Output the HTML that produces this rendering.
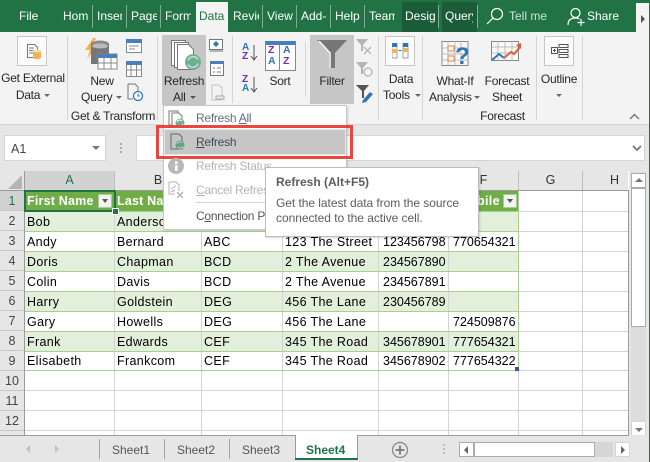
<!DOCTYPE html>
<html><head><meta charset="utf-8">
<style>
html,body{margin:0;padding:0;width:650px;height:462px;overflow:hidden;background:#e6e6e6}
body{position:relative;font-family:"Liberation Sans",sans-serif;font-size:12px;color:#262626}
.a{position:absolute}
.t{position:absolute;white-space:nowrap;line-height:16px;letter-spacing:-.25px}
.c{text-align:center}
.tab{position:absolute;top:7px;color:#fff;font-size:12px;line-height:19px;white-space:nowrap;overflow:hidden}
.sep{position:absolute;top:5px;width:1px;height:23px;background:#7fae95}
.rs{position:absolute;top:36px;width:1px;height:84px;background:#d4d4d4}
.cell{position:absolute;white-space:nowrap;font-size:12.5px;line-height:20px;color:#000;overflow:hidden;letter-spacing:.35px}
.n{letter-spacing:0}
.rh{position:absolute;left:0;width:24px;height:19px;background:#e6e6e6;text-align:center;line-height:21px;font-size:12.5px;color:#444;border-bottom:1px solid #c6c6c6}
.ch{position:absolute;top:171px;height:19px;background:#e6e6e6;text-align:center;line-height:19px;font-size:12.5px;color:#333;border-right:1px solid #bdbdbd}
.h{position:absolute;left:25px;width:603px;height:1px;background:#d4d4d4}
.v{position:absolute;top:191px;width:1px;height:244px;background:#d4d4d4}
.b{position:absolute;left:25px;width:493px;height:19px;background:#e2efda}
.g{position:absolute;left:25px;width:493px;height:1px;background:#a9d08e}
.m{position:absolute;left:196px;font-size:12px;line-height:16px;white-space:nowrap;letter-spacing:-.25px}
.st{position:absolute;top:442px;font-size:12px;color:#555;line-height:16px}
.dv{position:absolute;top:439px;width:1px;height:20px;background:#a6a6a6}
u{text-decoration:underline}
</style></head><body>

<!-- title / tabs bar -->
<div class="a" style="left:0;top:0;width:650px;height:32px;background:#217346"></div>
<div class="a" style="left:196px;top:2px;width:32px;height:30px;background:#f3f3f3"></div>
<div class="a" style="left:402px;top:2px;width:36px;height:30px;background:#1a5c38"></div>
<div class="a" style="left:442px;top:2px;width:35px;height:30px;background:#1a5c38"></div>
<div class="tab" style="left:19px;width:30px">File</div>
<div class="tab" style="left:63px;width:26px">Home</div>
<div class="tab" style="left:97px;width:25px">Insert</div>
<div class="tab" style="left:131px;width:26px">Page</div>
<div class="tab" style="left:165px;width:26px">Form</div>
<div class="tab" style="left:199px;width:28px;color:#217346">Data</div>
<div class="tab" style="left:233px;width:26px">Review</div>
<div class="tab" style="left:267px;width:26px">View</div>
<div class="tab" style="left:301px;width:28px">Add-</div>
<div class="tab" style="left:335px;width:26px">Help</div>
<div class="tab" style="left:369px;width:26px">Team</div>
<div class="tab" style="left:405px;width:30px">Design</div>
<div class="tab" style="left:445px;width:28px">Query</div>
<div class="sep" style="left:92px"></div><div class="sep" style="left:126px"></div><div class="sep" style="left:160px"></div><div class="sep" style="left:262px"></div><div class="sep" style="left:296px"></div><div class="sep" style="left:330px"></div><div class="sep" style="left:364px"></div><div class="sep" style="left:438px"></div><div class="sep" style="left:477px"></div>
<svg class="a" style="left:485px;top:6px" width="20" height="20" viewBox="0 0 20 20" fill="none" stroke="#fff" stroke-width="1.2"><circle cx="12" cy="8" r="5.5"/><path d="M8 12L2 18"/></svg>
<div class="tab" style="left:509px;color:#cfe3d8">Tell me</div>
<svg class="a" style="left:567px;top:7px" width="20" height="20" viewBox="0 0 20 20" fill="none" stroke="#fff" stroke-width="1.2"><circle cx="8.5" cy="6" r="4.5"/><path d="M1 18c0-5 3-7 7.500-7 2 0 3 .5 4 1"/><path d="M14 12v7M10.500 15.500h7"/></svg>
<div class="tab" style="left:587px">Share</div>
<div class="a" style="left:636px;top:3px;width:13px;height:29px;background:#f3f3f3"></div>
<div class="a" style="left:641px;top:15px;border-left:4px solid #555;border-top:4px solid transparent;border-bottom:4px solid transparent"></div>

<!-- ribbon -->
<div class="a" style="left:0;top:32px;width:650px;height:92px;background:#f3f3f3;border-bottom:1px solid #d4d4d4"></div>
<div class="rs" style="left:67px"></div><div class="rs" style="left:157px"></div><div class="rs" style="left:378px"></div><div class="rs" style="left:422px"></div><div class="rs" style="left:536px"></div><div class="rs" style="left:582px"></div>
<div class="a" style="left:232px;top:36px;width:1px;height:67px;background:#d4d4d4"></div>
<div class="a" style="left:305px;top:42px;width:1px;height:55px;background:#d4d4d4"></div>

<!-- highlighted buttons -->
<div class="a" style="left:162px;top:35px;width:44px;height:70px;background:#c6c6c6"></div>
<div class="a" style="left:310px;top:35px;width:44px;height:69px;background:#c6c6c6"></div>

<!-- Get External -->
<div class="a" style="left:17px;top:36px;width:30px;height:30px;background:#fafafa;border:1px solid #c6c6c6;box-sizing:border-box"></div>
<svg class="a" style="left:24px;top:42px" width="20" height="20" viewBox="0 0 20 20"><path d="M3.500 2.500h7l3 3v6h-4v4h-6z" fill="#fff" stroke="#777"/><path d="M5 6h5M5 8.500h4M5 11h4" stroke="#777"/><rect x="9" y="8" width="8" height="9" rx="2" fill="#eeb45c"/><ellipse cx="13" cy="9" rx="4" ry="1.500" fill="#f7dca8"/></svg>
<div class="t c" style="left:0;top:70px;width:66px">Get External</div>
<div class="t c" style="left:0;top:87px;width:56px">Data</div>
<div class="a" style="left:44px;top:94px;border-top:3px solid #666;border-left:3px solid transparent;border-right:3px solid transparent"></div>

<!-- New Query -->
<svg class="a" style="left:83px;top:37px" width="36" height="36" viewBox="0 0 36 36"><path d="M10 1L2 13h5l-3 9 10-13H9l4-8z" fill="#eeb45c"/><ellipse cx="17" cy="7" rx="9" ry="3.500" fill="#8a8a8a"/><path d="M8 7v20h18V7z" fill="#777"/><ellipse cx="17" cy="9" rx="8" ry="2.500" fill="#bbb"/><rect x="15" y="17" width="19" height="15" fill="#fff" stroke="#888"/><rect x="15" y="17" width="19" height="4" fill="#4a7eb8"/><path d="M21 21v11M28 21v11M15 26h19" stroke="#888"/></svg>
<div class="t c" style="left:84px;top:73px;width:36px">New</div>
<div class="t" style="left:81px;top:89px">Query</div>
<div class="a" style="left:116px;top:96px;border-top:3px solid #666;border-left:3px solid transparent;border-right:3px solid transparent"></div>
<svg class="a" style="left:126px;top:38px" width="18" height="70" viewBox="0 0 18 70"><rect x=".5" y="1.500" width="15" height="13" fill="#fff" stroke="#888"/><rect x="0" y="1" width="16" height="4" fill="#4a7eb8"/><path d="M3 8h10M3 11h6" stroke="#888"/><rect x=".5" y="23.500" width="15" height="15" fill="#fff" stroke="#888"/><rect x="0" y="23" width="16" height="4" fill="#4a7eb8"/><path d="M5 27v11M10.500 27v11M1 32h14" stroke="#888"/><path d="M2 46h7l3 3v6" fill="none" stroke="#777"/><path d="M2 46v15h5" fill="none" stroke="#777"/><circle cx="12" cy="58" r="4.500" fill="#fff" stroke="#2e75b6" stroke-width="1.300"/><path d="M12 55.500V58h2" fill="none" stroke="#2e75b6"/></svg>
<div class="t c" style="left:70px;top:108px;width:86px">Get &amp; Transform</div>

<!-- Refresh All -->
<svg class="a" style="left:170px;top:39px" width="34" height="34" viewBox="0 0 34 34"><path d="M1.500 1.500h14v25h-14z" fill="#fff" stroke="#777"/><path d="M4.500 3.500h14v25h-14z" fill="#fff" stroke="#777"/><path d="M7.500 5.500h11l5 5v20h-16z" fill="#fff" stroke="#777"/><circle cx="23" cy="23" r="8" fill="#6db08e"/><path d="M18 21.500a5.500 5.500 0 0 1 10-1M28 24.500a5.500 5.500 0 0 1-10 1" stroke="#c6dccf" stroke-width="1.600" fill="none"/></svg>
<div class="t c" style="left:162px;top:73px;width:44px">Refresh</div>
<div class="t" style="left:173px;top:89px">All</div>
<div class="a" style="left:190px;top:96px;border-top:3px solid #555;border-left:3px solid transparent;border-right:3px solid transparent"></div>
<svg class="a" style="left:208px;top:38px" width="18" height="66" viewBox="0 0 18 66"><rect x="1.500" y="1.500" width="13" height="10" fill="#fff" stroke="#777"/><path d="M8 3l3 3-3 3-3-3z" fill="#2e75b6"/><path d="M2 13h13" stroke="#777"/><rect x="2.500" y="23.500" width="13" height="14" fill="#fff" stroke="#777"/><rect x="2" y="23" width="14" height="3" fill="#4a7eb8"/><path d="M5 30h2M9 30h4M5 34h2M9 34h4" stroke="#777"/><path d="M4 47h7l3 3v12H4z" fill="none" stroke="#c0c0c0"/><path d="M8 58h8v3H8z" fill="#eee" stroke="#aaa"/></svg>

<!-- Sort -->
<div class="t" style="left:242px;top:43px;font-size:10px;line-height:9px;color:#2e75b6;font-weight:bold;letter-spacing:0">A<br><span style="color:#7030a0">Z</span></div>
<svg class="a" style="left:250px;top:44px" width="8" height="18" viewBox="0 0 8 18" fill="none" stroke="#555"><path d="M4 1v15M1 12l3 4 3-4"/></svg>
<div class="t" style="left:242px;top:75px;font-size:10px;line-height:9px;color:#7030a0;font-weight:bold;letter-spacing:0">Z<br><span style="color:#2e75b6">A</span></div>
<svg class="a" style="left:250px;top:76px" width="8" height="18" viewBox="0 0 8 18" fill="none" stroke="#555"><path d="M4 1v15M1 12l3 4 3-4"/></svg>
<div class="a" style="left:265px;top:41px;width:29px;height:25px;background:#fff;border:1px solid #888;border-top:4px solid #4a7eb8;box-sizing:content-box"></div>
<div class="a" style="left:279px;top:45px;width:1px;height:25px;background:#888"></div>
<div class="t" style="left:268px;top:45px;font-size:10.500px;line-height:11px;color:#7030a0;font-weight:bold;letter-spacing:0">Z<br><span style="color:#2e75b6">A</span></div>
<div class="t" style="left:283px;top:45px;font-size:10.500px;line-height:11px;color:#2e75b6;font-weight:bold;letter-spacing:0">A<br><span style="color:#7030a0">Z</span></div>
<div class="t c" style="left:262px;top:73px;width:36px">Sort</div>

<!-- Filter -->
<svg class="a" style="left:316px;top:38px" width="32" height="32" viewBox="0 0 32 32"><path d="M1 2h30L19 15v15h-6V15z" fill="#777"/><path d="M3 3l11 12v15M14 15" fill="none" stroke="#fff" stroke-width="1.500"/></svg>
<div class="t c" style="left:310px;top:73px;width:44px">Filter</div>
<svg class="a" style="left:355px;top:38px" width="20" height="66" viewBox="0 0 20 66"><path d="M1 1h12L8 7v6H6V7z" fill="#b5b5b5"/><path d="M9 9l7 7M16 9l-7 7" stroke="#b5b5b5" stroke-width="1.300"/><path d="M1 24h12L8 30v6H6v-6z" fill="#b5b5b5"/><circle cx="13" cy="34" r="4" fill="none" stroke="#b5b5b5" stroke-width="1.300"/><path d="M1 47h13L9 53v7H7v-7z" fill="#555"/><path d="M8 62l7-8 3 2-7 8-4 1z" fill="#2e75b6"/></svg>

<!-- Data tools -->
<div class="a" style="left:385px;top:36px;width:30px;height:30px;background:#fafafa;border:1px solid #c6c6c6;box-sizing:border-box"></div>
<svg class="a" style="left:392px;top:43px" width="18" height="16" viewBox="0 0 18 16"><rect x="0" y="0" width="5" height="15" fill="#fff" stroke="#666" stroke-width=".6"/><rect x="0" y="0" width="5" height="4" fill="#2e75b6"/><rect x="0" y="6" width="5" height="4" fill="#eeb45c"/><rect x="11" y="0" width="5" height="15" fill="#fff" stroke="#666" stroke-width=".6"/><rect x="11" y="0" width="5" height="4" fill="#2e75b6"/><rect x="11" y="5" width="5" height="4" fill="#eeb45c"/><path d="M6.500 7.500h3" stroke="#2e75b6"/></svg>
<div class="t c" style="left:380px;top:71px;width:42px">Data</div>
<div class="t" style="left:383px;top:87px">Tools</div>
<div class="a" style="left:415px;top:94px;border-top:3px solid #666;border-left:3px solid transparent;border-right:3px solid transparent"></div>

<!-- What-If -->
<svg class="a" style="left:441px;top:40px" width="36" height="34" viewBox="0 0 36 34"><rect x="1" y="1.500" width="26" height="24" fill="#f8f8f8" stroke="#888"/><path d="M1 8h26M1 14h26M1 20h26M7 1v25M14 1v25M20 1v25" stroke="#aaa" stroke-width=".7"/><rect x="7" y="6" width="6" height="5" fill="#fff" stroke="#ed7d31"/><rect x="7" y="16" width="6" height="5" fill="#fff" stroke="#ed7d31"/></svg>
<div class="t" style="left:455px;top:43px;font-size:24px;line-height:28px;font-weight:bold;color:#2e75b6;letter-spacing:0">?</div>
<div class="t c" style="left:426px;top:73px;width:58px">What-If</div>
<div class="t" style="left:429px;top:89px">Analysis</div>
<div class="a" style="left:474px;top:96px;border-top:3px solid #666;border-left:3px solid transparent;border-right:3px solid transparent"></div>

<!-- Forecast -->
<svg class="a" style="left:491px;top:40px" width="34" height="28" viewBox="0 0 34 28"><rect x=".5" y="1.500" width="27" height="19" fill="#f8f8f8" stroke="#888"/><path d="M1 7h27M1 13h27M7 1v20M14 1v20M21 1v20" stroke="#aaa" stroke-width=".7"/><path d="M1 20l7-6 5 4" fill="none" stroke="#2e75b6" stroke-width="2"/><path d="M13 18l7-6 3 2 6-7" fill="none" stroke="#d9603b" stroke-width="2"/><path d="M25 5l5-2v6z" fill="#d9603b"/></svg>
<div class="t c" style="left:479px;top:73px;width:56px">Forecast</div>
<div class="t c" style="left:479px;top:89px;width:56px">Sheet</div>
<div class="t c" style="left:423px;top:108px;width:159px">Forecast</div>

<!-- Outline -->
<div class="a" style="left:544px;top:36px;width:30px;height:30px;background:#fafafa;border:1px solid #c6c6c6;box-sizing:border-box"></div>
<svg class="a" style="left:551px;top:44px" width="18" height="15" viewBox="0 0 18 15" fill="none" stroke="#555"><rect x=".5" y="3.500" width="6" height="6"/><path d="M2 6.500h3M3.500 5v3M8 .5h9v3H8zM8 5.500h9v3H8zM8 10.500h9v3H8z"/></svg>
<div class="t c" style="left:537px;top:71px;width:44px">Outline</div>
<div class="a" style="left:556px;top:94px;border-top:3px solid #666;border-left:3px solid transparent;border-right:3px solid transparent"></div>
<svg class="a" style="left:629px;top:113px" width="11" height="7" viewBox="0 0 11 7" fill="none" stroke="#777" stroke-width="1.500"><path d="M1 6l4.500-4.500L10 6"/></svg>

<!-- formula bar -->
<div class="a" style="left:4px;top:135px;width:102px;height:26px;background:#fff;border:1px solid #d4d4d4;box-sizing:border-box"></div>
<div class="t" style="left:11px;top:141px;font-size:12.500px;color:#444;letter-spacing:0">A1</div>
<div class="a" style="left:92px;top:146px;border-top:4px solid #777;border-left:4px solid transparent;border-right:4px solid transparent"></div>
<div class="a" style="left:120px;top:143px;width:2px;height:2px;background:#aaa;box-shadow:0 4px #aaa,0 8px #aaa"></div>
<div class="a" style="left:136px;top:135px;width:509px;height:26px;background:#fff;border:1px solid #d4d4d4;box-sizing:border-box"></div>
<svg class="a" style="left:632px;top:145px" width="10" height="7" viewBox="0 0 10 7" fill="none" stroke="#777" stroke-width="1.800"><path d="M1 1l4 4 4-4"/></svg>

<!-- grid -->
<div class="a" style="left:0;top:171px;width:629px;height:264px;background:#fff"></div>
<div class="b" style="top:212px"></div><div class="b" style="top:252px"></div><div class="b" style="top:292px"></div><div class="b" style="top:332px"></div>
<div class="h" style="top:211px"></div><div class="h" style="top:231px"></div><div class="h" style="top:251px"></div><div class="h" style="top:271px"></div><div class="h" style="top:291px"></div><div class="h" style="top:311px"></div><div class="h" style="top:331px"></div><div class="h" style="top:351px"></div><div class="h" style="top:370px"></div><div class="h" style="top:390px"></div><div class="h" style="top:410px"></div><div class="h" style="top:430px"></div>
<div class="v" style="left:114px"></div><div class="v" style="left:201px"></div><div class="v" style="left:282px"></div><div class="v" style="left:378px"></div><div class="v" style="left:448px"></div><div class="v" style="left:518px"></div><div class="v" style="left:582px"></div>
<div class="g" style="top:231px"></div><div class="g" style="top:251px"></div><div class="g" style="top:271px"></div><div class="g" style="top:291px"></div><div class="g" style="top:311px"></div><div class="g" style="top:331px"></div><div class="g" style="top:351px"></div><div class="g" style="top:370px"></div><div class="g" style="top:211px"></div>
<div class="a" style="left:518px;top:191px;width:1px;height:180px;background:#a9d08e"></div>
<div class="a" style="left:25px;top:191px;width:493px;height:20px;background:#70ad47"></div>

<!-- headers -->
<div class="a" style="left:0;top:171px;width:24px;height:19px;background:#e6e6e6"></div>
<svg class="a" style="left:7px;top:175px" width="15" height="14"><path d="M15 0v14H1z" fill="#b4b4b4"/></svg>
<div class="ch" style="left:25px;width:89px;background:#d2d2d2;color:#217346">A</div>
<div class="ch" style="left:115px;width:86px">B</div>
<div class="ch" style="left:202px;width:80px">C</div>
<div class="ch" style="left:283px;width:95px">D</div>
<div class="ch" style="left:379px;width:69px">E</div>
<div class="ch" style="left:449px;width:69px">F</div>
<div class="ch" style="left:519px;width:63px">G</div>
<div class="ch" style="left:583px;width:45px;border-right:0;text-indent:18px">H</div>
<div class="a" style="left:24px;top:171px;width:1px;height:264px;background:#9b9b9b"></div>
<div class="a" style="left:0;top:190px;width:629px;height:1px;background:#9b9b9b"></div>
<div class="a" style="left:628px;top:190px;width:1px;height:245px;background:#9b9b9b"></div>
<div class="rh" style="top:191px;background:#d2d2d2;color:#217346">1</div>
<div class="rh" style="top:211px">2</div><div class="rh" style="top:231px">3</div><div class="rh" style="top:251px">4</div><div class="rh" style="top:271px">5</div><div class="rh" style="top:291px">6</div><div class="rh" style="top:311px">7</div><div class="rh" style="top:331px">8</div><div class="rh" style="top:351px">9</div><div class="rh" style="top:371px">10</div><div class="rh" style="top:391px">11</div><div class="rh" style="top:411px">12</div><div class="rh" style="top:431px;height:4px;line-height:4px;border:0"></div>

<!-- cells -->
<div class="cell" style="left:27px;top:191px;width:70px;color:#fff;font-weight:bold;letter-spacing:.2px">First Name</div>
<div class="cell" style="left:117px;top:191px;width:60px;color:#fff;font-weight:bold;letter-spacing:.2px">Last Name</div>
<div class="cell" style="left:477px;top:191px;width:24px;color:#fff;font-weight:bold">bile</div>
<div class="a" style="left:98px;top:194px;width:14px;height:14px;background:#f2f2f2;border:1px solid #a9c998;box-sizing:border-box"></div>
<div class="a" style="left:102px;top:199px;border-top:4px solid #555;border-left:3.500px solid transparent;border-right:3.500px solid transparent"></div>
<div class="a" style="left:503px;top:194px;width:14px;height:14px;background:#f2f2f2;border:1px solid #a9c998;box-sizing:border-box"></div>
<div class="a" style="left:507px;top:199px;border-top:4px solid #555;border-left:3.500px solid transparent;border-right:3.500px solid transparent"></div>

<div class="cell" style="left:27px;top:212px">Bob</div><div class="cell" style="left:117px;top:212px">Anderson</div>
<div class="cell" style="left:27px;top:232px">Andy</div><div class="cell" style="left:117px;top:232px">Bernard</div><div class="cell" style="left:204px;top:232px">ABC</div><div class="cell" style="left:285px;top:232px">123 The Street</div><div class="cell n" style="left:383px;top:232px">123456798</div><div class="cell n" style="left:453px;top:232px">770654321</div>
<div class="cell" style="left:27px;top:252px">Doris</div><div class="cell" style="left:117px;top:252px">Chapman</div><div class="cell" style="left:204px;top:252px">BCD</div><div class="cell" style="left:285px;top:252px">2 The Avenue</div><div class="cell n" style="left:383px;top:252px">234567890</div>
<div class="cell" style="left:27px;top:272px">Colin</div><div class="cell" style="left:117px;top:272px">Davis</div><div class="cell" style="left:204px;top:272px">BCD</div><div class="cell" style="left:285px;top:272px">2 The Avenue</div><div class="cell n" style="left:383px;top:272px">234567891</div>
<div class="cell" style="left:27px;top:292px">Harry</div><div class="cell" style="left:117px;top:292px">Goldstein</div><div class="cell" style="left:204px;top:292px">DEG</div><div class="cell" style="left:285px;top:292px">456 The Lane</div><div class="cell n" style="left:383px;top:292px">230456789</div>
<div class="cell" style="left:27px;top:312px">Gary</div><div class="cell" style="left:117px;top:312px">Howells</div><div class="cell" style="left:204px;top:312px">DEG</div><div class="cell" style="left:285px;top:312px">456 The Lane</div><div class="cell n" style="left:453px;top:312px">724509876</div>
<div class="cell" style="left:27px;top:332px">Frank</div><div class="cell" style="left:117px;top:332px">Edwards</div><div class="cell" style="left:204px;top:332px">CEF</div><div class="cell" style="left:285px;top:332px">345 The Road</div><div class="cell n" style="left:383px;top:332px">345678901</div><div class="cell n" style="left:453px;top:332px">777654321</div>
<div class="cell" style="left:27px;top:351px">Elisabeth</div><div class="cell" style="left:117px;top:351px">Frankcom</div><div class="cell" style="left:204px;top:351px">CEF</div><div class="cell" style="left:285px;top:351px">345 The Road</div><div class="cell n" style="left:383px;top:351px">345678902</div><div class="cell n" style="left:453px;top:351px">777654322</div>
<div class="a" style="left:515px;top:367px;width:4px;height:4px;background:#4050a8"></div>

<!-- active cell -->
<div class="a" style="left:24px;top:190px;width:92px;height:22px;border:2px solid #217346;box-sizing:border-box"></div>
<div class="a" style="left:112px;top:208px;width:5px;height:5px;background:#217346;border:1px solid #fff"></div>

<!-- menu -->
<div class="a" style="left:163px;top:105px;width:184px;height:125px;background:#fff;border:1px solid #c6c6c6;box-sizing:border-box;box-shadow:1px 1px 2px rgba(0,0,0,.15)"></div>
<svg class="a" style="left:168px;top:110px" width="18" height="18" viewBox="0 0 18 18"><path d="M1 1h9v14H1z" fill="#fff" stroke="#777"/><path d="M4 3h7l3 3v11H4z" fill="#fff" stroke="#777"/><circle cx="12" cy="13" r="4.500" fill="#6db08e"/><path d="M9 12a3 3 0 0 1 5-1M15 14a3 3 0 0 1-5 1" stroke="#fff" fill="none"/></svg>
<div class="m" style="top:110px;color:#5b6d80">Refresh <u>A</u>ll</div>
<div class="a" style="left:164px;top:129px;width:182px;height:26px;background:#c6c6c6;border:1px solid #e6e6e6;box-sizing:border-box"></div>
<div class="a" style="left:156px;top:125px;width:197px;height:34px;border:3px solid #e8463f;box-sizing:border-box"></div>
<svg class="a" style="left:169px;top:133px" width="18" height="18" viewBox="0 0 18 18"><path d="M2 1h8l3 3v12H2z" fill="none" stroke="#666"/><circle cx="11" cy="12" r="4.500" fill="#5fa583"/><path d="M8 11a3 3 0 0 1 5-1M14 13a3 3 0 0 1-5 1" stroke="#c6c6c6" fill="none"/></svg>
<div class="m" style="top:134px;color:#3c4a58"><u>R</u>efresh</div>
<svg class="a" style="left:168px;top:158px" width="16" height="16" viewBox="0 0 16 16"><circle cx="8" cy="8" r="8" fill="#b8b8b8"/><rect x="7" y="7" width="2.500" height="6" fill="#fff"/><rect x="7" y="3.500" width="2.500" height="2.500" fill="#fff"/></svg>
<div class="m" style="top:158px;color:#b4b4b4">Refresh Status</div>
<svg class="a" style="left:167px;top:181px" width="18" height="18" viewBox="0 0 18 18" fill="none" stroke="#b0b0b0"><path d="M2 1h7l3 3v6M2 1v12h6"/><path d="M4 8l5-3M4 11l4-2"/><path d="M10 11l6 6M16 11l-6 6" stroke-width="1.300"/></svg>
<div class="m" style="top:182px;color:#b4b4b4"><u>C</u>ancel Refresh</div>
<div class="a" style="left:196px;top:202px;width:150px;height:1px;background:#d4d4d4"></div>
<div class="m" style="top:208px;color:#555">C<u>o</u>nnection Properties</div>

<!-- tooltip -->
<div class="a" style="left:265px;top:167px;width:214px;height:70px;background:#fff;border:1px solid #bdbdbd;box-sizing:border-box;box-shadow:1px 1px 2px rgba(0,0,0,.15)"></div>
<div class="t" style="left:276px;top:174px;font-weight:bold;color:#5c5c5c;letter-spacing:0">Refresh (Alt+F5)</div>
<div class="t" style="left:276px;top:195px;color:#5c5c5c;letter-spacing:-.05px">Get the latest data from the source</div>
<div class="t" style="left:276px;top:210px;color:#5c5c5c;letter-spacing:-.05px">connected to the active cell.</div>

<!-- vertical scrollbar -->
<div class="a" style="left:631px;top:172px;width:15px;height:264px;background:#dcdcdc"></div>
<div class="a" style="left:631px;top:173px;width:15px;height:15px;background:#fff;border:1px solid #ababab;box-sizing:border-box"></div>
<div class="a" style="left:635px;top:178px;border-bottom:4px solid #777;border-left:4px solid transparent;border-right:4px solid transparent"></div>
<div class="a" style="left:631px;top:188px;width:15px;height:139px;background:#fff;border:1px solid #ababab;box-sizing:border-box"></div>
<div class="a" style="left:631px;top:421px;width:15px;height:15px;background:#fff;border:1px solid #d4d4d4;box-sizing:border-box"></div>
<div class="a" style="left:635px;top:428px;border-top:4px solid #777;border-left:4px solid transparent;border-right:4px solid transparent"></div>
<div class="a" style="left:649px;top:0;width:1px;height:462px;background:#217346"></div>

<!-- sheet bar -->
<div class="a" style="left:0;top:435px;width:649px;height:27px;background:#e6e6e6"></div>
<div class="a" style="left:0;top:435px;width:295px;height:1px;background:#9b9b9b"></div>
<div class="a" style="left:358px;top:435px;width:271px;height:1px;background:#9b9b9b"></div>
<div class="a" style="left:26px;top:445px;border-right:4px solid #c0c0c0;border-top:4px solid transparent;border-bottom:4px solid transparent"></div>
<div class="a" style="left:55px;top:445px;border-left:4px solid #c0c0c0;border-top:4px solid transparent;border-bottom:4px solid transparent"></div>
<div class="dv" style="left:99px"></div><div class="dv" style="left:164px"></div><div class="dv" style="left:229px"></div>
<div class="st" style="left:112px">Sheet1</div><div class="st" style="left:177px">Sheet2</div><div class="st" style="left:242px">Sheet3</div>
<div class="a" style="left:295px;top:435px;width:63px;height:24px;background:#fff;border-left:1px solid #9b9b9b;border-right:1px solid #9b9b9b;box-sizing:border-box"></div>
<div class="a" style="left:295px;top:458px;width:63px;height:2px;background:#217346"></div>
<div class="st" style="left:306px;color:#217346;font-weight:bold">Sheet4</div>
<svg class="a" style="left:391px;top:441px" width="18" height="18" viewBox="0 0 18 18" fill="none" stroke="#888"><circle cx="9" cy="9" r="7.500" stroke-width="1.300"/><path d="M9 4.500v9M4.500 9h9" stroke-width="1.800" stroke="#777"/></svg>
<div class="a" style="left:443px;top:444px;width:2px;height:2px;background:#bbb;box-shadow:0 4px #bbb,0 8px #bbb"></div>
<div class="a" style="left:459px;top:442px;width:154px;height:15px;background:#d6d6d6"></div>
<div class="a" style="left:459px;top:442px;width:15px;height:15px;background:#fff;border:1px solid #ababab;box-sizing:border-box"></div>
<div class="a" style="left:464px;top:446px;border-right:4px solid #666;border-top:4px solid transparent;border-bottom:4px solid transparent"></div>
<div class="a" style="left:474px;top:442px;width:121px;height:15px;background:#fff;border:1px solid #ababab;box-sizing:border-box"></div>
<div class="a" style="left:615px;top:442px;width:15px;height:15px;background:#fff;border:1px solid #d4d4d4;box-sizing:border-box"></div>
<div class="a" style="left:621px;top:446px;border-left:4px solid #666;border-top:4px solid transparent;border-bottom:4px solid transparent"></div>
</body></html>
